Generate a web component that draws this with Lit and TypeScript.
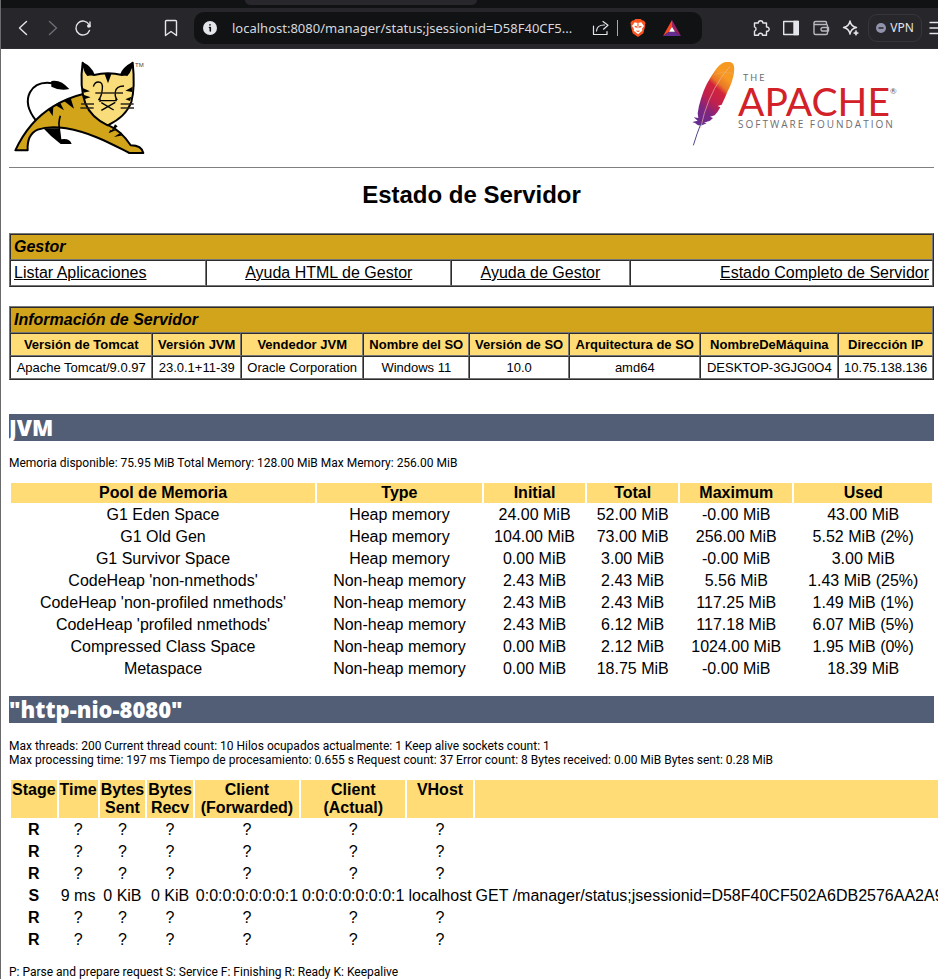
import { LitElement, html, css, svg } from "lit";
import { customElement } from "lit/decorators.js";

@customElement("browser-bar")
class BrowserBar extends LitElement {
  static styles = css`
    :host { display: block; font-family: "Noto Sans", "Open Sans", sans-serif; color: #e4e5ea; }
    * { box-sizing: border-box; }
    .tabs { height: 8px; background: #111214; display: flex; overflow: hidden; }
    .tab { width: 232px; height: 5px; margin-left: 244px; background: #27272c; border-radius: 0 0 8px 8px; }
    .bar { height: 41px; background: #26262b; border-bottom: 1px solid #302c34; display: flex; align-items: center; padding-left: 7px; overflow: hidden; }
    button { border: 0; padding: 0; margin: 0; background: none; color: inherit; font: inherit; display: flex; align-items: center; justify-content: center; flex: none; width: 30px; height: 30px; }
    svg { display: block; flex: none; }
    .dim { color: #6d6e75; }
    .mark { margin: 0 8px 0 58px; }
    .url { flex: 1; min-width: 0; height: 32px; background: #111214; border-radius: 10px; display: flex; align-items: center; padding: 0 22px 0 8px; }
    .url button { width: 16px; }
    .info { margin-right: 14px; }
    input { flex: 1; min-width: 0; width: 0; border: 0; padding: 0; background: none; color: #d6d8de; font: 13px/20px "Noto Sans", "Open Sans", sans-serif; text-overflow: ellipsis; outline: 0; }
    .line { width: 1px; height: 16px; background: #a9aab0; margin: 0 12px 0 8px; }
    .bat { margin-left: 18px; width: 18px; }
    .tools { display: flex; margin-left: 44px; }
    .url .share { margin-left: 16px; }
    .vpn { width: 54px; height: 28px; border: 1px solid #36363d; border-radius: 9px; gap: 4px; font-size: 12px; margin: 0 7px 0 2px; }
    .menu { width: 9px; justify-content: flex-start; overflow: hidden; }
  `;
  render() {
    const s = (body: unknown, w = 18, vb = 18) => html`<svg width=${w} height=${w} viewBox="0 0 ${vb} ${vb}" fill="none" stroke="currentColor" stroke-width="1.4" stroke-linecap="round" stroke-linejoin="round">${body}</svg>`;
    return html`
      <div class="tabs"><div class="tab"></div></div>
      <nav class="bar">
        <button aria-label="Back">${s(svg`<path d="M12.500 2.500 5.500 9l7 6.500"/>`)}</button>
        <button class="dim" aria-label="Forward">${s(svg`<path d="M5.500 2.500 12.500 9l-7 6.500"/>`)}</button>
        <button aria-label="Reload">${s(svg`<path d="M15 5.500A7 7 0 1 0 15.500 11.500"/><circle cx="14.800" cy="7" r="1.800" fill="currentColor" stroke="none"/><path d="M16 3v4.500"/>`)}</button>
        <button class="mark" aria-label="Bookmark">${s(svg`<path d="M4.500 1.500h9a1 1 0 0 1 1 1v14L9 12.500 3.500 16.500v-14a1 1 0 0 1 1-1z"/>`)}</button>
        <div class="url">
          <button class="info" aria-label="Site information">${s(svg`<circle cx="8" cy="8" r="7" fill="#e4e5ea" stroke="none"/><path d="M7.500 7.500h.8v3.500M8 4.800v.1" stroke="#111214" stroke-width="1.600"/>`, 16, 16)}</button>
          <input aria-label="Address" value="localhost:8080/manager/status;jsessionid=D58F40CF5..." />
          <button class="share" aria-label="Share">${s(svg`<path d="M1.500 7v8.500h13.500v-3M4.500 12c.3-4 3-6 7.500-6h.5M11 2.500 16 6.200l-4.500 4" stroke-width="1.200"/>`)}</button>
          <span class="line"></span>
          <button aria-label="Brave shields"><svg width="16" height="18" viewBox="0 0 48 54"><path d="M12 4 16 0h16l4 4 6 1 5 7-2 5 1 3-6 23L24 54 8 43 2 20l1-3-2-5 5-7z" fill="#fb5420"/><path d="M14 10l10 2 10-2 8 11-6 8 1 6-5 4-8 7-8-7-5-4 1-6-6-8z" fill="#fff"/><path d="M14 20l7 2-1 5-6-3zM34 20l-7 2 1 5 6-3zM20 34l4 2 4-2 1 2-5 4-5-4zM22 13h4l-1 15h-2z" fill="#fb5420"/></svg></button>
          <button class="bat" aria-label="Brave rewards"><svg width="18" height="16" viewBox="0 0 54 48"><path d="M27 0 0 48l18-13 9-15z" fill="#ff4724"/><path d="M27 0l27 48-18-13-9-15z" fill="#9e1f63"/><path d="M0 48h54L36 35H18z" fill="#662d91"/><path d="M27 20 18 35h18z" fill="#fff"/></svg></button>
        </div>
        <div class="tools">
          <button aria-label="Extensions">${s(svg`<path d="M2.500 4h3.800a2.300 2.300 0 1 1 4.600 0h3.600v4a2.200 2.200 0 1 1 0 4.300v4h-4a2 2 0 0 0-4 0h-4v-4.200a2.200 2.200 0 0 0 0-4.200z"/>`)}</button>
          <button aria-label="Sidebar">${s(svg`<rect x="1.700" y="2.500" width="14.600" height="13" /><path d="M12 2.500h4.300v13H12z" fill="currentColor"/>`)}</button>
          <button aria-label="Wallet">${s(svg`<path d="M2 3.500v10.500q0 1.500 1.500 1.500H14q1.500 0 1.500-1.500V6.500q0-1-1-1H2M2 4q0-1.500 1.500-1.500h10q1 0 1 1v2M16.500 8.500H11q-2 0-2 1.800T11 12h5.500z" stroke="#b8b9bf"/>`)}</button>
          <button aria-label="Assistant">${s(svg`<path d="M8 2q1 5.500 6.500 6.500Q9 9.500 8 15 7 9.500 1.500 8.500 7 7.500 8 2z"/><path d="M14 11.500q.5 2 2.500 2.500-2 .5-2.500 2.500-.5-2-2.500-2.500 2-.5 2.500-2.500z" fill="currentColor" stroke-width=".6"/>`)}</button>
        </div>
        <button class="vpn"><svg width="10" height="10" viewBox="0 0 10 10"><circle cx="5" cy="5" r="5" fill="#9293ab"/><path d="M2.500 5h5" stroke="#26262b" stroke-width="1.500"/></svg>VPN</button>
        <button class="menu" aria-label="Menu">${s(svg`<path d="M1 3.500h16M1 9h16M1 14.500h16" />`)}</button>
      </nav>`;
  }
}

const tomcat = html`<svg class="tomcat" role="img" aria-label="Tomcat" viewBox="27 36 411 288">
  <path d="M46 307C70 255 110 205 160 175c30-18 60-30 90-37l76 94c28 12 50 35 66 60 18 0 34 6 38 23h-42c-50-25-110-60-190-74-30-5-60-5-85 4-20 9-32 28-30 62z" fill="#d1a41a" stroke="#000" stroke-width="6" stroke-linejoin="round"/>
  <path d="M108 218l22 23h50l4 33q25-4 31 14h-33q-30-22-52-47z"/>
  <path d="M108 218C86 190 76 160 90 133c12-22 36-32 68-27" fill="none" stroke="#000" stroke-width="6"/>
  <path d="M154 99q28-6 54 24-30 6-54-7z"/>
  <path d="M181 203q-7 22-2 40" fill="none" stroke="#000" stroke-width="5"/>
  <path d="M144 184l14 20 2-27zM164 170l28 17-13-26zM191 158l31 24-10-32zM333 252l20-17-8-6zM330 247l-4 9 24-11zM342 267l28-5-7-9z"/>
  <path d="M248 44q10 34 34 37 42-10 84 0 24-3 32-37 8 74-4 118-16 44-71 70-50-24-67-66-18-50-8-122z" fill="#f9dd7b" stroke="#000" stroke-width="6" stroke-linejoin="round"/>
  <path d="M248 42q28 14 36 38l-22 4q-14-14-14-42zM397 42q-30 16-37 38l22 4q15-14 15-42zM313 76h22l-11 30zM248 120l22 10-20 4zM250 140l22 8-20 6zM398 116l-22 12 20 4zM394 146l-18 8 14 5z"/>
  <path d="M280 116q4-14 15-14 14 0 12 20-2 25-12 34M372 114q-24 0-26 18-2 16 6 24M298 158h50M300 148v14M348 148v12M304 187l42-24M304 164l37 22" fill="none" stroke="#000" stroke-width="4"/>
  <path d="M286 135h83M243 168h39M241 180h40M362 168h39M362 180h40" stroke="#2c2618" stroke-width="5"/>
  <text class="tm" x="405" y="56">TM</text>
</svg>`;

const feather = html`<svg class="feather" role="img" aria-label="Apache feather" viewBox="36 30 135 264">
  <defs><linearGradient id="plume" x1=".8" y1="0" x2=".2" y2="1"><stop offset="0" stop-color="#f69923"/><stop offset=".18" stop-color="#f79a23"/><stop offset=".32" stop-color="#e97826"/><stop offset=".4" stop-color="#d2243b"/><stop offset=".6" stop-color="#be2050"/><stop offset=".78" stop-color="#7d2580"/><stop offset="1" stop-color="#662d91"/></linearGradient></defs>
  <path d="M153 36q16 2 12 32-4 28-20 58-8 20-17 38l-12 4 8 4q-8 15-17 24l-14 4 9 4-9 8-18 6 8 2-14 6H57l-8-6-9-4 16-4-12-10 14 2-2-14q2-20 10-44 12-44 46-90 18-22 31-20z" fill="url(#plume)"/>
  <path d="M152 50Q100 110 76 190L65 234" fill="none" stroke="#f0b4a4" stroke-width="2"/>
  <path d="M106 74q16-5 26-8 14 4 32 3" fill="none" stroke="#e9b48a" stroke-width="1"/>
  <path d="M66 220q-12 30-23 66" fill="none" stroke="#51468a" stroke-width="3"/>
</svg>`;

const info: [string, string][] = [
  ["Versión de Tomcat", "Apache Tomcat/9.0.97"], ["Versión JVM", "23.0.1+11-39"],
  ["Vendedor JVM", "Oracle Corporation"], ["Nombre del SO", "Windows 11"],
  ["Versión de SO", "10.0"], ["Arquitectura de SO", "amd64"],
  ["NombreDeMáquina", "DESKTOP-3GJG0O4"], ["Dirección IP", "10.75.138.136"],
];
const pools = [
  ["G1 Eden Space", "Heap memory", "24.00 MiB", "52.00 MiB", "-0.00 MiB", "43.00 MiB"],
  ["G1 Old Gen", "Heap memory", "104.00 MiB", "73.00 MiB", "256.00 MiB", "5.52 MiB (2%)"],
  ["G1 Survivor Space", "Heap memory", "0.00 MiB", "3.00 MiB", "-0.00 MiB", "3.00 MiB"],
  ["CodeHeap 'non-nmethods'", "Non-heap memory", "2.43 MiB", "2.43 MiB", "5.56 MiB", "1.43 MiB (25%)"],
  ["CodeHeap 'non-profiled nmethods'", "Non-heap memory", "2.43 MiB", "2.43 MiB", "117.25 MiB", "1.49 MiB (1%)"],
  ["CodeHeap 'profiled nmethods'", "Non-heap memory", "2.43 MiB", "6.12 MiB", "117.18 MiB", "6.07 MiB (5%)"],
  ["Compressed Class Space", "Non-heap memory", "0.00 MiB", "2.12 MiB", "1024.00 MiB", "1.95 MiB (0%)"],
  ["Metaspace", "Non-heap memory", "0.00 MiB", "18.75 MiB", "-0.00 MiB", "18.39 MiB"],
];
const idle = ["R", "?", "?", "?", "?", "?", "?", ""];
const busy = ["S", "9 ms", "0 KiB", "0 KiB", "0:0:0:0:0:0:0:1", "0:0:0:0:0:0:0:1", "localhost", "GET /manager/status;jsessionid=D58F40CF502A6DB2576AA2A9"];
const threads = [idle, idle, idle, busy, idle, idle];

@customElement("app-root")
class AppRoot extends LitElement {
  static styles = css`
    :host { display: block; min-height: 100vh; overflow: hidden; box-sizing: border-box; border-left: 1px solid #6b6b6e; background: #fff; color: #000; font: 16px/18px "Liberation Sans", Arial, sans-serif; }
    * { box-sizing: border-box; }
    main { padding: 8px 4px 0 8px; }
    header { display: flex; justify-content: space-between; align-items: flex-start; height: 110px; padding: 3px 33px 0 0; }
    .tomcat { width: 137px; height: 96px; }
    .tm { font: 18px "Liberation Sans", sans-serif; fill: #444; }
    .asf { display: flex; }
    .feather { width: 45px; height: 88px; }
    .words { display: flex; flex-direction: column; width: 165px; font-family: Lato, sans-serif; color: #6d6e71; padding: 12px 0 0 2px; }
    .small { font-size: 9px; line-height: 12px; letter-spacing: 2px; white-space: nowrap; }
    .sub { font-family: "Open Sans", sans-serif; font-size: 10px; }
    .the { padding-left: 5px; }
    .apache { font-size: 39px; line-height: 34px; color: #d22128; display: flex; }
    .reg { font-size: 8px; line-height: 14px; color: #555; }
    hr { border: 0; height: 1px; background: #808080; margin: 0; }
    h1 { font-size: 24px; line-height: 28px; margin: 13px 0 24px; text-align: center; }
    table { width: 100%; }
    th, td { text-align: center; }
    .grid { border: 1px solid; border-color: #767676 #2c2c2c #2c2c2c #767676; border-spacing: 0; margin-bottom: 19px; }
    .grid th, .grid td { border: 1px solid; border-color: #2c2c2c #767676 #767676 #2c2c2c; padding: 3px; }
    .grid .cap { background: #d2a41c; text-align: left; font-style: italic; }
    .grid td.left { text-align: left; }
    .grid td.right { text-align: right; }
    .grid .cell { font-size: 13px; line-height: 15px; white-space: nowrap; }
    .grid th.cell { background: #ffdc75; }
    a { color: #000; text-decoration: underline; }
    h2 { font: 800 22px/27px "Open Sans", "Noto Sans", sans-serif; color: #fff; background: #525d76; margin: 0; }
    .first { margin-top: 34px; }
    p { font: 12px/14px Roboto, sans-serif; margin: 15px 0 11px; }
    .stats { margin-top: 16px; }
    .list { border-spacing: 2px; margin-bottom: 15px; }
    .list th, .list td { padding: 1px; vertical-align: top; }
    .list thead th { background: #ffdc75; }
    .wide { white-space: nowrap; margin-bottom: 13px; }
    .legend { margin: 0; }
  `;
  render() {
    return html`
      <browser-bar></browser-bar>
      <main>
        <header>
          <a href="#tomcat">${tomcat}</a>
          <div class="asf">${feather}
            <div class="words">
              <span class="small the">THE</span>
              <span class="apache">APACHE<span class="reg">®</span></span>
              <span class="small sub">SOFTWARE FOUNDATION</span>
            </div>
          </div>
        </header>
        <hr />
        <h1>Estado de Servidor</h1>
        <table class="grid">
          <tr><th class="cap" colspan="4">Gestor</th></tr>
          <tr>
            <td class="left"><a href="#list">Listar Aplicaciones</a></td>
            <td><a href="#html">Ayuda HTML de Gestor</a></td>
            <td><a href="#help">Ayuda de Gestor</a></td>
            <td class="right"><a href="#all">Estado Completo de Servidor</a></td>
          </tr>
        </table>
        <table class="grid">
          <tr><th class="cap" colspan="8">Información de Servidor</th></tr>
          <tr>${info.map(([h]) => html`<th class="cell">${h}</th>`)}</tr>
          <tr>${info.map(([, v]) => html`<td class="cell">${v}</td>`)}</tr>
        </table>
        <h2 class="first">JVM</h2>
        <p>Memoria disponible: 75.95 MiB Total Memory: 128.00 MiB Max Memory: 256.00 MiB</p>
        <table class="list">
          <thead><tr>${["Pool de Memoria", "Type", "Initial", "Total", "Maximum", "Used"].map((h) => html`<th>${h}</th>`)}</tr></thead>
          <tbody>${pools.map((r) => html`<tr>${r.map((c) => html`<td>${c}</td>`)}</tr>`)}</tbody>
        </table>
        <h2>"http-nio-8080"</h2>
        <p class="stats">Max threads: 200 Current thread count: 10 Hilos ocupados actualmente: 1 Keep alive sockets count: 1<br />Max processing time: 197 ms Tiempo de procesamiento: 0.655 s Request count: 37 Error count: 8 Bytes received: 0.00 MiB Bytes sent: 0.28 MiB</p>
        <table class="list wide">
          <thead><tr><th>Stage</th><th>Time</th><th>Bytes<br />Sent</th><th>Bytes<br />Recv</th><th>Client<br />(Forwarded)</th><th>Client<br />(Actual)</th><th>VHost</th><th></th></tr></thead>
          <tbody>${threads.map((r) => html`<tr>${r.map((c, i) => (i === 0 ? html`<th>${c}</th>` : html`<td>${c}</td>`))}</tr>`)}</tbody>
        </table>
        <p class="legend">P: Parse and prepare request S: Service F: Finishing R: Ready K: Keepalive</p>
      </main>`;
  }
}
